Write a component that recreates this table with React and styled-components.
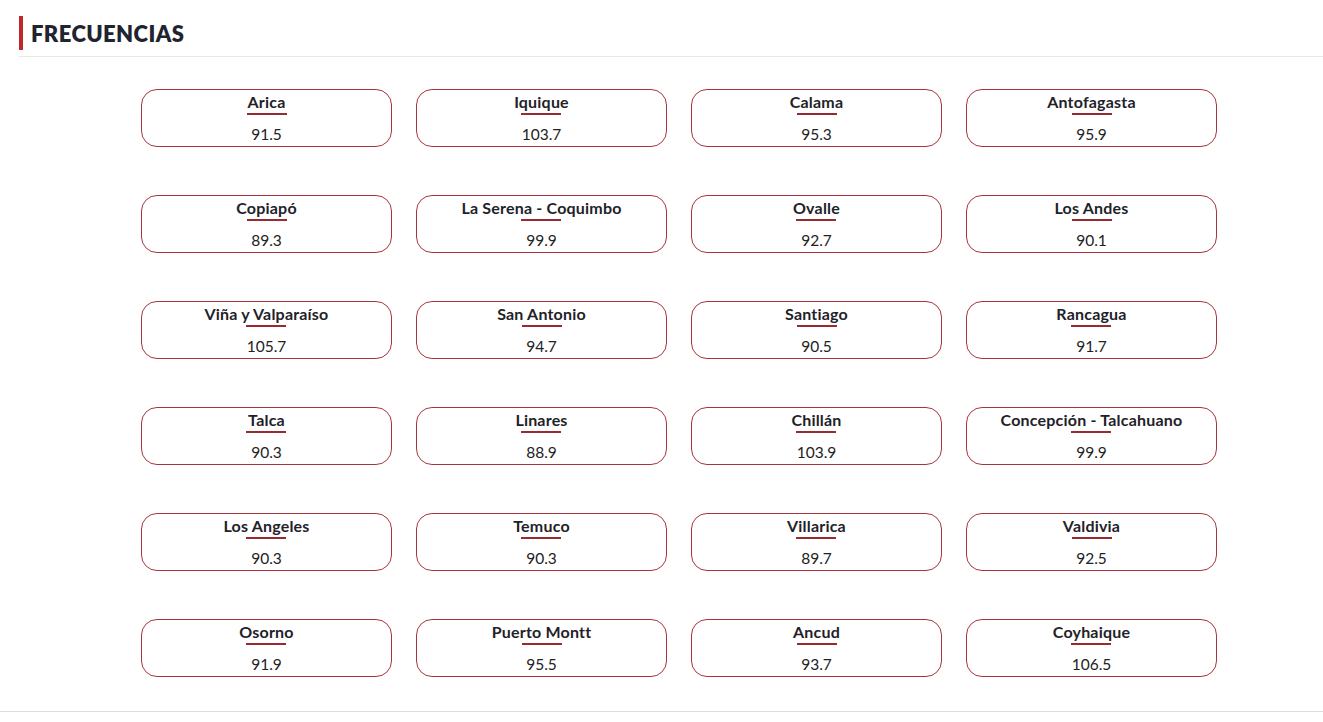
import React from 'react';
import styled, {createGlobalStyle} from 'styled-components';

const stations = [
    ['Arica', '91.5'], ['Iquique', '103.7'], ['Calama', '95.3'], ['Antofagasta', '95.9'],
    ['Copiapó', '89.3'], ['La Serena - Coquimbo', '99.9'], ['Ovalle', '92.7'], ['Los Andes', '90.1'],
    ['Viña y Valparaíso', '105.7'], ['San Antonio', '94.7'], ['Santiago', '90.5'], ['Rancagua', '91.7'],
    ['Talca', '90.3'], ['Linares', '88.9'], ['Chillán', '103.9'], ['Concepción - Talcahuano', '99.9'],
    ['Los Angeles', '90.3'], ['Temuco', '90.3'], ['Villarica', '89.7'], ['Valdivia', '92.5'],
    ['Osorno', '91.9'], ['Puerto Montt', '95.5'], ['Ancud', '93.7'], ['Coyhaique', '106.5'],
];

export default function App() {
    return (
        <>
            <GlobalStyle/>
            <Section>
                <Header>
                    <Title>FRECUENCIAS</Title>
                </Header>
                <Grid>
                    {stations.map(([city, freq]) => (
                        <Card key={city}>
                            <City>{city}</City>
                            <Freq>{freq}</Freq>
                        </Card>
                    ))}
                </Grid>
            </Section>
        </>
    );
}

const GlobalStyle = createGlobalStyle`
  body {
    margin: 0;
    background: #fff;
    font-family: Lato, "Liberation Sans", sans-serif;
    color: #1f2229;
  }
`;

const Section = styled.section`
  border-bottom: 1px solid #dedede;
  padding-bottom: 34px;
`;

const Header = styled.div`
  margin-left: 19px;
  padding-top: 16px;
  border-bottom: 1px solid #ebe8dc;
  padding-bottom: 6px;
`;

const Title = styled.h2`
  margin: 0;
  border-left: 4px solid #c0272d;
  padding-left: 8px;
  height: 34px;
  line-height: 35px;
  font-size: 22px;
  font-weight: 800;
  color: #1f2430;
  letter-spacing: 0.4px;
`;

const Grid = styled.div`
  display: grid;
  grid-template-columns: repeat(4, 251px);
  column-gap: 24px;
  row-gap: 48px;
  margin: 32px 0 0 141px;
`;

const Card = styled.div`
  box-sizing: border-box;
  height: 58px;
  border: 1px solid #a8353d;
  border-radius: 16px;
  display: flex;
  flex-direction: column;
  align-items: center;
  padding-top: 3px;
`;

const City = styled.div`
  font-size: 16px;
  font-weight: 700;
  line-height: 18px;
  letter-spacing: 0.2px;
  position: relative;
  padding-bottom: 4px;

  &::after {
    content: "";
    position: absolute;
    left: 50%;
    bottom: 0;
    width: 40px;
    height: 2px;
    margin-left: -20px;
    background: #982a31;
  }
`;

const Freq = styled.div`
  margin-top: 9px;
  font-size: 15.5px;
  line-height: 20px;
  color: #222;
`;
